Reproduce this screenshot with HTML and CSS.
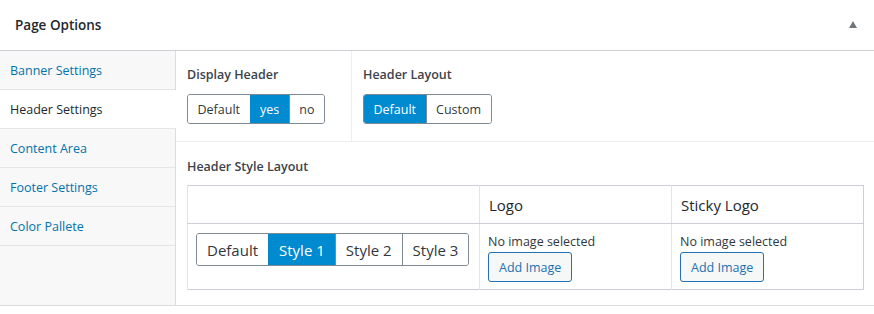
FILE: index.html
```html
<html>
  <head>
    <link rel="stylesheet" href="styles.css">
  </head>
  <body>
    <div class="postbox">
      <div class="postbox-header">
        <h2>Page Options</h2>
        <svg class="toggle" width="8" height="7" viewBox="0 0 8 7">
          <path d="M4 0L8 7H0Z" fill="#72777c"/>
        </svg>
      </div>

      <div class="inside">
        <!-- Tabs -->
        <ul class="tabs">
          <li class="tab">Banner Settings</li>
          <li class="tab active">Header Settings</li>
          <li class="tab">Content Area</li>
          <li class="tab">Footer Settings</li>
          <li class="tab">Color Pallete</li>
        </ul>

        <!-- Panel -->
        <div class="panel">
          <div class="row">
            <div class="field field-narrow">
              <label>Display Header</label>
              <div class="btn-group">
                <button class="seg">Default</button>
                <button class="seg active">yes</button>
                <button class="seg">no</button>
              </div>
            </div>
            <div class="field field-wide">
              <label>Header Layout</label>
              <div class="btn-group">
                <button class="seg active">Default</button>
                <button class="seg">Custom</button>
              </div>
            </div>
          </div>

          <div class="field field-table">
            <label>Header Style Layout</label>
            <table class="style-table">
              <tr>
                <th class="col-style"></th>
                <th class="col-logo">Logo</th>
                <th class="col-logo">Sticky Logo</th>
              </tr>
              <tr>
                <td>
                  <div class="btn-group btn-group-lg">
                    <button class="seg">Default</button>
                    <button class="seg active">Style 1</button>
                    <button class="seg">Style 2</button>
                    <button class="seg">Style 3</button>
                  </div>
                </td>
                <td>
                  <p class="no-image">No image selected</p>
                  <button class="add-image">Add Image</button>
                </td>
                <td>
                  <p class="no-image">No image selected</p>
                  <button class="add-image">Add Image</button>
                </td>
              </tr>
            </table>
          </div>
        </div>
      </div>
    </div>
  </body>
</html>
```

FILE: styles.css
```css
* {
  box-sizing: border-box;
  margin: 0;
  padding: 0;
}

body {
  background: #fff;
  font-family: 'Open Sans', sans-serif;
  color: #32373c;
}

.postbox {
  width: 874px;
}

.postbox-header {
  height: 51px;
  display: flex;
  align-items: center;
  justify-content: space-between;
  padding: 0 17px 0 15px;
  border-bottom: 1px solid #ccd0d4;
}

.postbox-header h2 {
  font-size: 13.5px;
  font-weight: 600;
  color: #23282d;
}

.toggle {
  margin-top: -1px;
}

.inside {
  display: flex;
  border-bottom: 1px solid #dcdcde;
}

/* Tabs */
.tabs {
  list-style: none;
  width: 176px;
  flex-shrink: 0;
  background: #f8f8f8;
  border-right: 1px solid #dcdcde;
}

.tab {
  height: 39px;
  padding: 0 10px;
  display: flex;
  align-items: center;
  font-size: 12.5px;
  color: #0073aa;
  border-bottom: 1px solid #e5e5e5;
}

.tab.active {
  background: #fff;
  color: #23282d;
  margin-right: -1px;
}

/* Panel */
.panel {
  flex: 1;
}

.row {
  display: flex;
  border-bottom: 1px solid #eee;
}

.field {
  padding: 14px 10px 17px 11px;
}

.field-narrow {
  width: 175px;
}

.field-wide {
  flex: 1;
  border-left: 1px solid #eee;
}

.field-table {
  padding-top: 15px;
  padding-bottom: 15px;
}

.field-table label {
  margin-bottom: 8px;
}

label {
  display: block;
  font-size: 12.5px;
  font-weight: 600;
  line-height: 20px;
  color: #3c434a;
  margin-bottom: 9px;
}

/* Segmented buttons */
.btn-group {
  display: inline-flex;
  border: 1px solid #7e8993;
  border-radius: 3px;
  overflow: hidden;
}

.seg {
  height: 28px;
  padding: 0 9.5px;
  background: #fff;
  border: none;
  border-left: 1px solid #7e8993;
  font-family: 'Open Sans', sans-serif;
  font-size: 12.5px;
  color: #32373c;
}

.seg:first-child {
  border-left: none;
}

.seg.active {
  background: #008ad0;
  border-left-color: #008ad0;
  color: #fff;
}

.seg.active + .seg {
  border-left-color: #7e8993;
}

.btn-group-lg .seg {
  height: 31px;
  padding: 0 10px;
  font-size: 15px;
}

/* Table */
.style-table {
  width: 677px;
  border-collapse: collapse;
  border: 1px solid #ccd0d4;
}

.style-table th {
  height: 38px;
  padding: 0 9px;
  text-align: left;
  font-size: 15px;
  font-weight: 400;
  color: #23282d;
  border-bottom: 1px solid #ccd0d4;
  border-left: 1px solid #e2e4e7;
}

.style-table td {
  padding: 9px 8px 7px;
  vertical-align: top;
  border-left: 1px solid #e2e4e7;
}

.col-style {
  width: 292px;
}

.col-logo {
  width: 192px;
}

.no-image {
  font-size: 12.5px;
  line-height: 18px;
  color: #32373c;
}

.add-image {
  margin-top: 1px;
  height: 30px;
  padding: 0 10px;
  background: #f6f7f7;
  border: 1px solid #2271b1;
  border-radius: 3px;
  font-family: 'Open Sans', sans-serif;
  font-size: 12.5px;
  color: #2271b1;
}
```
